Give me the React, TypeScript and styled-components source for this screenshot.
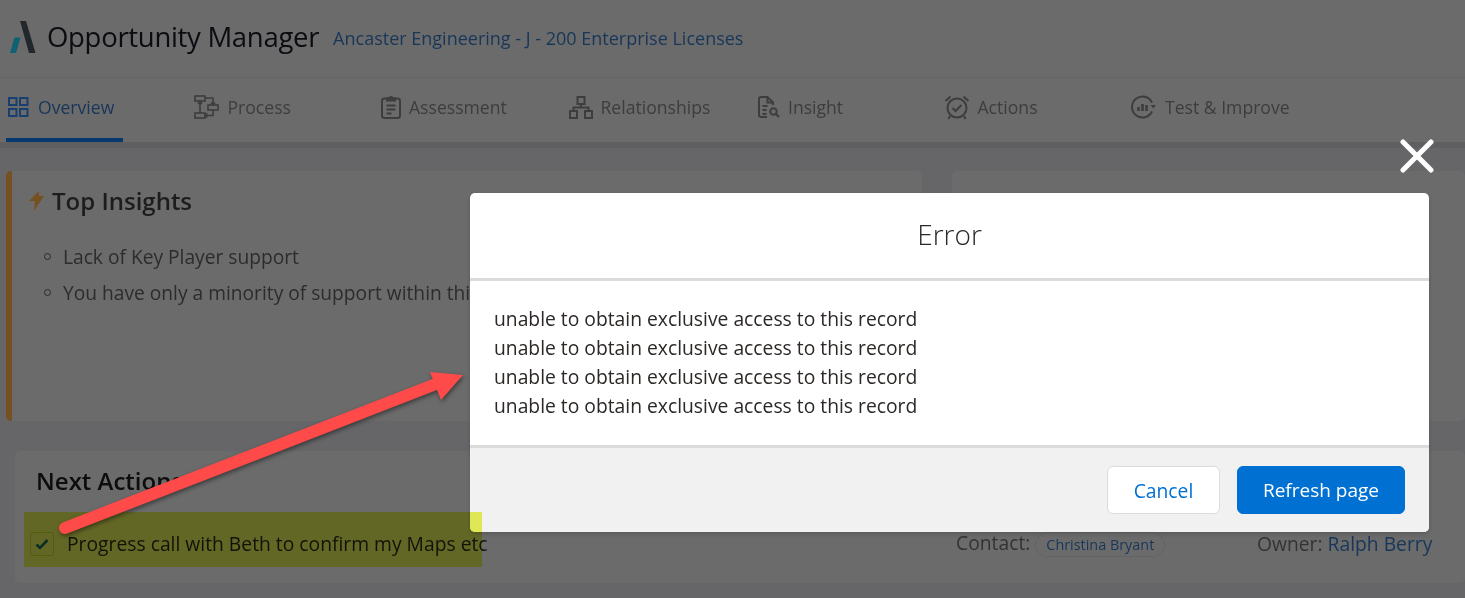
import React from 'react';
import styled, { createGlobalStyle } from 'styled-components';

const GlobalStyle = createGlobalStyle`
  html, body {
    margin: 0;
    padding: 0;
    background: #666669;
    font-family: 'Open Sans', 'Liberation Sans', sans-serif;
  }
`;

const Page = styled.div`
  position: relative;
  width: 1465px;
  height: 598px;
  overflow: hidden;
`;

const Header = styled.header`
  display: flex;
  align-items: center;
  height: 78px;
  padding: 0 0 4px 9px;
  box-sizing: border-box;
  background: #6b6b6b;
  border-bottom: 1px solid #646464;
`;

const Title = styled.h1`
  margin: 0 0 0 10px;
  font-size: 27.5px;
  font-weight: 400;
  letter-spacing: -0.3px;
  color: #0b0b12;
`;

const Subtitle = styled.a`
  margin-left: 14px;
  padding-top: 2px;
  font-size: 18px;
  color: #183659;
`;

const TabBar = styled.nav`
  display: grid;
  grid-template-columns: repeat(7, 187.5px);
  height: 64px;
  padding-left: 6px;
  background: #6b6b6b;
  border-bottom: 6px solid #5f5f61;
`;

const Tab = styled.a<{ $active?: boolean; $iconInset: number }>`
  display: flex;
  align-items: center;
  align-self: stretch;
  gap: 8px;
  box-sizing: border-box;
  width: ${p => (p.$active ? '117px' : 'auto')};
  padding-left: ${p => p.$iconInset}px;
  padding-bottom: 2px;
  font-size: 17.6px;
  white-space: nowrap;
  color: ${p => (p.$active ? '#183659' : '#3d3d3d')};
  border-bottom: 4px solid ${p => (p.$active ? '#063a6e' : 'transparent')};
  svg {
    flex: none;
  }
`;

const CardRow = styled.div`
  display: grid;
  grid-template-columns: 916px 513px;
  gap: 30px;
  padding: 23px 0 0 6px;
`;

const Card = styled.section`
  height: 250px;
  background: #6b6b6b;
  border-radius: 5px;
`;

const InsightCard = styled(Card)`
  box-sizing: border-box;
  padding: 15px 0 0 17px;
  border-left: 6px solid #77501f;
`;

const CardHeading = styled.h2`
  display: flex;
  align-items: center;
  gap: 8px;
  margin: 0;
  font-size: 24px;
  font-weight: 600;
  line-height: 30px;
  color: #1d1d1d;
`;

const BulletList = styled.ul`
  margin: 22px 0 0;
  padding: 0 0 0 15px;
  list-style: none;
`;

const Bullet = styled.li`
  display: flex;
  align-items: center;
  gap: 12px;
  height: 36px;
  font-size: 19.2px;
  white-space: nowrap;
  color: #2c2c2c;
  &::before {
    content: '';
    flex: none;
    width: 5px;
    height: 5px;
    border: 1px solid #2c2c2c;
    border-radius: 50%;
  }
`;

const ActionsCard = styled.section`
  box-sizing: border-box;
  height: 132px;
  margin: 30px 0 0 15px;
  padding: 14px 0 0 21px;
  background: #6b6b6b;
  border-radius: 5px;
`;

const ActionsHeading = styled.h2`
  margin: 0;
  font-size: 24px;
  font-weight: 600;
  line-height: 32px;
  color: #0d0d0d;
`;

const ActionRow = styled.div`
  display: flex;
  align-items: center;
  margin: 32px 0 0 -6px;
  font-size: 19.3px;
  white-space: nowrap;
  color: #131313;
`;

const Check = styled.span`
  display: flex;
  flex: none;
  align-items: center;
  justify-content: center;
  box-sizing: border-box;
  width: 24px;
  height: 24px;
  margin: 2px 13px 0 0;
  border: 1px solid #5c5f2a;
  border-radius: 3px;
`;

const ActionText = styled.span`
  flex: none;
  width: 889px;
`;

const Meta = styled.span`
  flex: none;
  width: 301px;
  color: #333;
`;

const Chip = styled.a`
  display: inline-block;
  margin-left: 5px;
  padding: 0 10px;
  font-size: 14.4px;
  line-height: 23px;
  color: #183659;
  border: 1px solid #636363;
  border-radius: 13px;
`;

const OwnerLink = styled.a`
  color: #183659;
`;

/* everything below lies over the page */
const CloseButton = styled.button`
  position: absolute;
  left: 1400px;
  top: 139px;
  width: 34px;
  height: 34px;
  padding: 0;
  background: none;
  border: 0;
`;

const Modal = styled.div`
  position: absolute;
  left: 470px;
  top: 193px;
  width: 959px;
  height: 339px;
  display: flex;
  flex-direction: column;
  border-radius: 5px;
  overflow: hidden;
  background: #fff;
  box-shadow: 0 2px 4px rgba(0, 0, 0, 0.16);
`;

const ModalHeader = styled.div`
  display: flex;
  align-items: center;
  justify-content: center;
  box-sizing: border-box;
  height: 88px;
  padding-bottom: 4px;
  font-size: 28px;
  font-weight: 300;
  color: #2b2826;
  border-bottom: 3px solid #dddbda;
`;

const ModalBody = styled.div`
  flex: 1;
  padding: 23px 24px 0;
  font-size: 19.3px;
  line-height: 29px;
  color: #2b2826;
`;

const ModalFooter = styled.div`
  display: flex;
  justify-content: flex-end;
  align-items: flex-start;
  gap: 17px;
  height: 87px;
  box-sizing: border-box;
  padding: 18px 24px 0;
  background: #f1f1f1;
  border-top: 3px solid #dddbda;
`;

const ModalButton = styled.button<{ $primary?: boolean }>`
  height: 48px;
  padding: 0;
  width: ${p => (p.$primary ? '168px' : '113px')};
  font-family: inherit;
  font-size: ${p => (p.$primary ? '19px' : '19.3px')};
  font-weight: ${p => (p.$primary ? 500 : 400)};
  color: ${p => (p.$primary ? '#fff' : '#0070d2')};
  background: ${p => (p.$primary ? '#0070d2' : '#fff')};
  border: 1px solid ${p => (p.$primary ? '#0070d2' : '#dddbda')};
  border-radius: 6px;
`;

const Highlight = styled.div`
  position: absolute;
  left: 24px;
  top: 512px;
  width: 458px;
  height: 55px;
  background: #ebf55a;
  mix-blend-mode: multiply;
`;

const Annotation = styled.svg`
  position: absolute;
  left: 0;
  top: 0;
  pointer-events: none;
  filter: drop-shadow(1px 2px 2px rgba(0, 0, 0, 0.45));
`;

const iconProps = {
  fill: 'none',
  stroke: 'currentColor',
  strokeWidth: 2,
};

const OverviewIcon = () => (
  <svg width="23" height="22" viewBox="0 0 23 22" fill="none" stroke="#17406f" strokeWidth="2">
    <rect x="2" y="2" width="7.5" height="7" />
    <rect x="13" y="2" width="7.5" height="7" />
    <rect x="2" y="13" width="7.5" height="7" />
    <rect x="13" y="13" width="7.5" height="7" />
  </svg>
);

const ProcessIcon = () => (
  <svg width="26" height="24" viewBox="0 0 26 24" {...iconProps} strokeWidth="1.6">
    <rect x="1" y="1" width="10" height="5" />
    <rect x="14" y="10" width="10" height="5" />
    <rect x="1" y="18" width="10" height="5" />
    <path d="M6 6v12M4 9l2-2.500 2 2.500M11 3h8v7M17 7.500l2 2.500 2-2.500M19 15v5.500h-8M13.500 18.500l-2.500 2 2.500 2" />
  </svg>
);

const AssessmentIcon = () => (
  <svg width="20" height="24" viewBox="0 0 20 24" {...iconProps}>
    <rect x="1" y="3.500" width="18" height="19.500" rx="2.500" />
    <path d="M6 5.500v-2h2.500a1.500 1.500 0 0 1 3 0H14v2zM5.500 10.500h9M5.500 14.500h9M5.500 18.500h5" />
  </svg>
);

const RelationshipsIcon = () => (
  <svg width="24" height="23" viewBox="0 0 24 23" {...iconProps}>
    <rect x="8.500" y="1" width="7" height="7" />
    <rect x="1" y="15" width="7" height="7" />
    <rect x="16" y="15" width="7" height="7" />
    <path d="M12 8v3.500M4.500 15v-3.500h15V15" />
  </svg>
);

const InsightIcon = () => (
  <svg width="22" height="22" viewBox="0 0 22 22" {...iconProps}>
    <path d="M9 21H3a2 2 0 0 1-2-2V3a2 2 0 0 1 2-2h6.500L15 6.500V9" />
    <path d="M9.500 1.500v5h5M4.500 10h5M4.500 14h4M4.500 18h4" />
    <circle cx="15.500" cy="15.500" r="3.200" />
    <path d="M18 18l3 3" />
  </svg>
);

const ActionsIcon = () => (
  <svg width="26" height="25" viewBox="0 0 26 25" {...iconProps}>
    <circle cx="13" cy="13" r="9.500" />
    <path d="M8.500 13l3 3 6-6M1.500 6l5-4.500M24.500 6l-5-4.500M6 21l-1.500 3M20 21l1.500 3" />
  </svg>
);

const ImproveIcon = () => (
  <svg width="26" height="24" viewBox="0 0 26 24" fill="none" stroke="currentColor" strokeWidth="2">
    <path d="M21 16.500A10.500 10.500 0 1 1 21 7.500" />
    <path d="M7.500 12v4M11.500 9v7M15.500 10v6" strokeWidth="2.600" />
    <path d="M19.500 10h5.500l-2.750 3.500z" fill="currentColor" stroke="none" />
  </svg>
);

const TABS = [
  { label: 'Overview', icon: <OverviewIcon />, active: true, inset: 1 },
  { label: 'Process', icon: <ProcessIcon />, inset: 0 },
  { label: 'Assessment', icon: <AssessmentIcon />, inset: 0 },
  { label: 'Relationships', icon: <RelationshipsIcon />, inset: 0 },
  { label: 'Insight', icon: <InsightIcon />, inset: 2 },
  { label: 'Actions', icon: <ActionsIcon />, inset: 0 },
  { label: 'Test & Improve', icon: <ImproveIcon />, inset: 0 },
];

export default function App() {
  return (
    <Page>
      <GlobalStyle />
      <Header>
        <svg width="28" height="32" viewBox="0 0 28 32">
          <path d="M11 0h6l9.500 32H20z" fill="#22272b" />
          <path d="M5.500 16.500h6L7 32H1z" fill="#0f6272" />
        </svg>
        <Title>Opportunity Manager</Title>
        <Subtitle>Ancaster Engineering - J - 200 Enterprise Licenses</Subtitle>
      </Header>
      <TabBar>
        {TABS.map(tab => (
          <Tab key={tab.label} $active={tab.active} $iconInset={tab.inset}>
            {tab.icon}
            {tab.label}
          </Tab>
        ))}
      </TabBar>
      <CardRow>
        <InsightCard>
          <CardHeading>
            <svg width="15" height="20" viewBox="0 0 15 20">
              <path d="M10 0L0 10h6L5 20 15 5h-5z" fill="#77501f" />
            </svg>
            Top Insights
          </CardHeading>
          <BulletList>
            <Bullet>Lack of Key Player support</Bullet>
            <Bullet>You have only a minority of support within this</Bullet>
          </BulletList>
        </InsightCard>
        <Card />
      </CardRow>
      <ActionsCard>
        <ActionsHeading>Next Actions</ActionsHeading>
        <ActionRow>
          <Check>
            <svg width="14" height="12" viewBox="0 0 14 12">
              <path d="M1.500 6.500l3.500 3.500 7.500-8" fill="none" stroke="#0b3070" strokeWidth="2.600" />
            </svg>
          </Check>
          <ActionText>Progress call with Beth to confirm my Maps etc</ActionText>
          <Meta>
            Contact:<Chip>Christina Bryant</Chip>
          </Meta>
          <Meta>
            Owner: <OwnerLink>Ralph Berry</OwnerLink>
          </Meta>
        </ActionRow>
      </ActionsCard>

      <CloseButton aria-label="Close">
        <svg width="34" height="34" viewBox="0 0 34 34">
          <path d="M3 3l28 28M31 3L3 31" stroke="#fff" strokeWidth="5" strokeLinecap="round" />
        </svg>
      </CloseButton>
      <Modal>
        <ModalHeader>Error</ModalHeader>
        <ModalBody>
          <div>unable to obtain exclusive access to this record</div>
          <div>unable to obtain exclusive access to this record</div>
          <div>unable to obtain exclusive access to this record</div>
          <div>unable to obtain exclusive access to this record</div>
        </ModalBody>
        <ModalFooter>
          <ModalButton>Cancel</ModalButton>
          <ModalButton $primary>Refresh page</ModalButton>
        </ModalFooter>
      </Modal>
      <Highlight />
      <Annotation width="1465" height="598" viewBox="0 0 1465 598">
        <path d="M65 528L436 384" stroke="#ff4a4a" strokeWidth="12" strokeLinecap="round" />
        <path d="M430 372L463 375L441 400z" fill="#ff4a4a" />
      </Annotation>
    </Page>
  );
}
